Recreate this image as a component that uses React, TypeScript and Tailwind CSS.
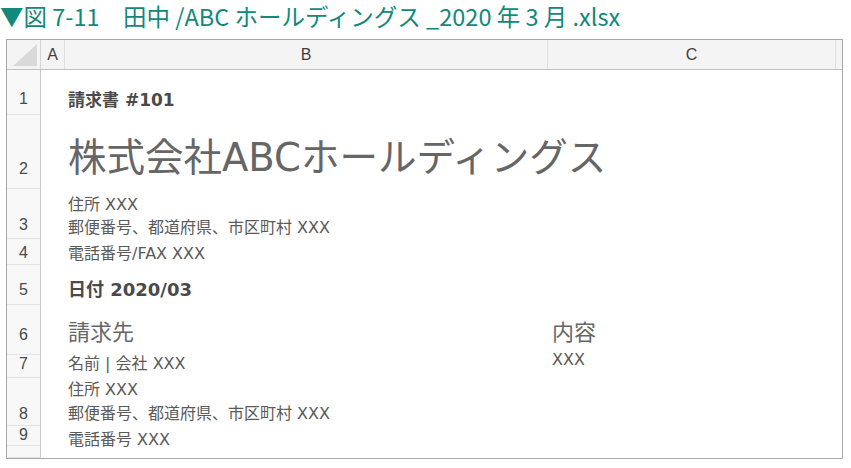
import React from "react";

type Row = {
  num: string;
  h: string;
  numCls: string;
  bCls: string;
  b: React.ReactNode;
  c?: React.ReactNode;
  cCls?: string;
};

const rows: Row[] = [
  {
    num: "1",
    h: "h-[45px]",
    numCls: "pb-[5px]",
    bCls: "pb-[4px]",
    b: <p className="text-[17px] font-bold leading-[22px] text-[#4a4a4a]">請求書 #101</p>,
  },
  {
    num: "2",
    h: "h-[74px]",
    numCls: "pb-[9px]",
    bCls: "pb-[9px]",
    b: <p className="text-[38.5px] leading-[44px] text-[#666666]">株式会社ABCホールディングス</p>,
  },
  {
    num: "3",
    h: "h-[50px]",
    numCls: "pb-[3px]",
    bCls: "pb-0",
    b: (
      <>
        <p className="leading-[23px]">住所 XXX</p>
        <p className="leading-[23px]">郵便番号、都道府県、市区町村 XXX</p>
      </>
    ),
  },
  {
    num: "4",
    h: "h-[26px]",
    numCls: "pb-[1px]",
    bCls: "pb-0",
    b: <p className="leading-[22px]">電話番号/FAX XXX</p>,
  },
  {
    num: "5",
    h: "h-[40px]",
    numCls: "pb-[4px]",
    bCls: "pb-[3px]",
    b: <p className="text-[18px] font-bold leading-[24px] text-[#4a4a4a]">日付 2020/03</p>,
  },
  {
    num: "6",
    h: "h-[50px]",
    numCls: "pb-[9px]",
    bCls: "pb-[7px]",
    b: <p className="text-[22px] leading-[30px] text-[#666666]">請求先</p>,
    cCls: "pb-[7px]",
    c: <p className="text-[22px] leading-[30px] text-[#666666]">内容</p>,
  },
  {
    num: "7",
    h: "h-[23px]",
    numCls: "pb-[3px]",
    bCls: "pb-[3px]",
    b: <p className="leading-[22px]">名前 | 会社 XXX</p>,
    cCls: "pb-[7px]",
    c: <p className="leading-[22px]">XXX</p>,
  },
  {
    num: "8",
    h: "h-[48px]",
    numCls: "pb-[1px]",
    bCls: "pb-0",
    b: (
      <>
        <p className="leading-[24px]">住所 XXX</p>
        <p className="leading-[24px]">郵便番号、都道府県、市区町村 XXX</p>
      </>
    ),
  },
  {
    num: "9",
    h: "h-[20px]",
    numCls: "pb-0",
    bCls: "pb-0",
    b: <p className="mb-[-5px] leading-[22px]">電話番号 XXX</p>,
  },
  {
    num: "",
    h: "h-[12px]",
    numCls: "pb-0",
    bCls: "pb-0",
    b: null,
  },
];

const numFont = "font-['Liberation_Sans','Noto_Sans',sans-serif]";

export default function App() {
  return (
    <div className="h-[468px] w-[851px] overflow-hidden bg-white font-['DejaVu_Sans','Noto_Sans_CJK_JP',sans-serif]">
      {/* figure caption */}
      <div className="flex h-[39px] items-center pb-[5px] font-['Noto_Sans_CJK_JP',sans-serif] text-[23.5px] leading-none whitespace-pre text-[#12897b]">
        ▼図 7-11　田中 /ABC ホールディングス _2020 年 3 月 .xlsx
      </div>

      <div className="ml-[6px] w-[837px] border border-[#a8a8a8]">
        {/* column header */}
        <div className={`flex h-[30px] border-b border-[#c2c2c2] bg-[#f4f4f4] text-[16px] text-[#3f3f3f] ${numFont}`}>
          <div className="relative w-[34px] shrink-0 border-r border-[#d4d4d4]">
            <svg width="33" height="29" viewBox="0 0 33 29" className="absolute top-0 left-0">
              <polygon points="6,26 30,26 30,4" fill="#d9d9d9" />
            </svg>
          </div>
          <div className="flex w-[24px] shrink-0 items-center justify-center border-r border-[#e0e0e0]">A</div>
          <div className="flex w-[483px] shrink-0 items-center justify-center border-r border-[#e0e0e0]">B</div>
          <div className="flex w-[288px] shrink-0 items-center justify-center border-r border-[#e0e0e0]">C</div>
          <div className="flex-1" />
        </div>

        {rows.map((r, i) => (
          <div key={i} className={`flex ${r.h}`}>
            <div
              className={`flex w-[34px] shrink-0 flex-col justify-end border-r border-b border-r-[#c9c9c9] border-b-[#e4e4e4] bg-[#f8f8f8] text-center text-[16px] leading-[20px] text-[#4a4a4a] ${numFont} ${r.numCls}`}
            >
              {r.num}
            </div>
            <div className="w-[24px] shrink-0" />
            <div
              className={`flex w-[483px] shrink-0 flex-col justify-end pl-[3px] text-[16px] whitespace-nowrap text-[#5a5a5a] ${r.bCls}`}
            >
              {r.b}
            </div>
            <div
              className={`flex w-[288px] shrink-0 flex-col justify-end pl-[4px] text-[16px] whitespace-nowrap text-[#5a5a5a] ${r.cCls ?? ""}`}
            >
              {r.c}
            </div>
            <div className="flex-1" />
          </div>
        ))}
      </div>
    </div>
  );
}
